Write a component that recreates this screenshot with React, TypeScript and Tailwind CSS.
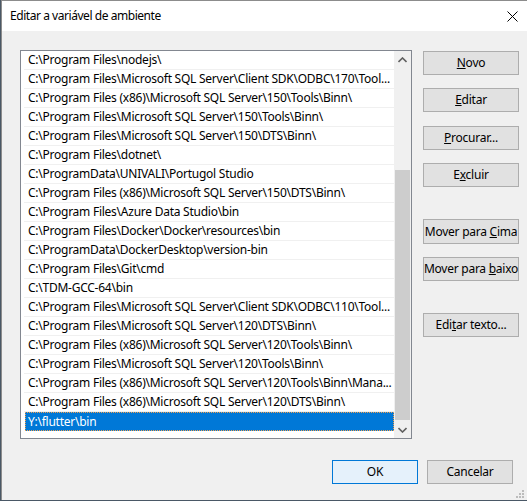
import { ReactNode } from 'react'

const paths = [
  'C:\\Program Files\\nodejs\\',
  'C:\\Program Files\\Microsoft SQL Server\\Client SDK\\ODBC\\170\\Tool...',
  'C:\\Program Files (x86)\\Microsoft SQL Server\\150\\Tools\\Binn\\',
  'C:\\Program Files\\Microsoft SQL Server\\150\\Tools\\Binn\\',
  'C:\\Program Files\\Microsoft SQL Server\\150\\DTS\\Binn\\',
  'C:\\Program Files\\dotnet\\',
  'C:\\ProgramData\\UNIVALI\\Portugol Studio',
  'C:\\Program Files (x86)\\Microsoft SQL Server\\150\\DTS\\Binn\\',
  'C:\\Program Files\\Azure Data Studio\\bin',
  'C:\\Program Files\\Docker\\Docker\\resources\\bin',
  'C:\\ProgramData\\DockerDesktop\\version-bin',
  'C:\\Program Files\\Git\\cmd',
  'C:\\TDM-GCC-64\\bin',
  'C:\\Program Files\\Microsoft SQL Server\\Client SDK\\ODBC\\110\\Tool...',
  'C:\\Program Files\\Microsoft SQL Server\\120\\DTS\\Binn\\',
  'C:\\Program Files (x86)\\Microsoft SQL Server\\120\\Tools\\Binn\\',
  'C:\\Program Files\\Microsoft SQL Server\\120\\Tools\\Binn\\',
  'C:\\Program Files (x86)\\Microsoft SQL Server\\120\\Tools\\Binn\\Mana...',
  'C:\\Program Files (x86)\\Microsoft SQL Server\\120\\DTS\\Binn\\',
  'Y:\\flutter\\bin',
]

function Btn({ children, className = '', primary = false }: { children: ReactNode; className?: string; primary?: boolean }) {
  return (
    <button
      className={`h-[24px] flex items-center justify-center whitespace-nowrap text-[12px] tracking-[-0.25px] text-black border ${
        primary ? 'border-[#0078d7] bg-[#e5f1fb]' : 'border-[#adadad] bg-[#e1e1e1]'
      } ${className}`}
    >
      <span>{children}</span>
    </button>
  )
}

export default function App() {
  const selected = paths.length - 1

  return (
    <div
      className="w-[527px] h-[501px] bg-[#4a5866] pl-[1px] overflow-hidden"
      style={{ fontFamily: '"Noto Sans", "Liberation Sans", sans-serif' }}
    >
      <div className="h-[500px] border-l border-t border-[#8c8c8c] bg-[#f0f0f0] flex flex-col">
        {/* title bar */}
        <div className="h-[30px] bg-white flex items-center justify-between pl-[8px] pr-[9px] shrink-0">
          <span className="text-[12px] tracking-[-0.45px] text-black">Editar a variável de ambiente</span>
          <svg width="11" height="11" viewBox="0 0 11 11" className="text-black">
            <path d="M0.5 0.5 L10.5 10.5 M10.5 0.5 L0.5 10.5" stroke="currentColor" strokeWidth="1" />
          </svg>
        </div>

        <div className="flex pt-[19px] pl-[18px]">
          {/* list box */}
          <div className="w-[392px] h-[389px] border border-[#828790] bg-white flex">
            <div className="flex-1 min-w-0 pl-[3px] flex flex-col">
              {paths.map((p, i) => (
                <div
                  key={i}
                  className={`h-[19px] shrink-0 flex items-center whitespace-nowrap overflow-hidden text-[12px] tracking-[-0.25px] ${
                    i === selected
                      ? 'bg-[#0078d7] text-white ml-[1px] border border-dotted border-[#f0a050] pl-[2px]'
                      : 'text-black border-b border-[#f0f0f0] pl-[4px]'
                  }`}
                >
                  {p}
                </div>
              ))}
            </div>
            {/* vertical scrollbar */}
            <div className="w-[17px] shrink-0 bg-[#f0f0f0] flex flex-col">
              <div className="h-[17px] flex items-center justify-center">
                <svg width="9" height="6" viewBox="0 0 9 6">
                  <path d="M0.5 5 L4.5 1 L8.5 5" stroke="#606060" strokeWidth="1.6" fill="none" />
                </svg>
              </div>
              <div className="flex-1 px-[1px] pt-[102px] pb-[1px]">
                <div className="h-full bg-[#cdcdcd]" />
              </div>
              <div className="h-[17px] flex items-center justify-center">
                <svg width="9" height="6" viewBox="0 0 9 6">
                  <path d="M0.5 1 L4.5 5 L8.5 1" stroke="#606060" strokeWidth="1.6" fill="none" />
                </svg>
              </div>
            </div>
          </div>

          {/* action buttons */}
          <div className="ml-[11px] w-[96px] flex flex-col pt-[1px]">
            <Btn>
              <u>N</u>ovo
            </Btn>
            <Btn className="mt-[13px]">
              <u>E</u>ditar
            </Btn>
            <Btn className="mt-[14px]">
              <u>P</u>rocurar...
            </Btn>
            <Btn className="mt-[13px]">
              E<u>x</u>cluir
            </Btn>
            <Btn className="mt-[32px] h-[25px]">
              Mover para <u>C</u>ima
            </Btn>
            <Btn className="mt-[13px]">
              Mover para <u>b</u>aixo
            </Btn>
            <Btn className="mt-[32px]">
              Edi<u>t</u>ar texto...
            </Btn>
          </div>
        </div>

        <div className="flex justify-end gap-[9px] pr-[14px] mt-[21px]">
          <Btn primary className="w-[86px]">
            OK
          </Btn>
          <Btn className="w-[86px]">Cancelar</Btn>
        </div>

        {/* size grip */}
        <div className="flex justify-end pr-[3px] mt-[6px]">
          <svg width="8" height="8" viewBox="0 0 8 8">
            <rect x="6" y="0" width="2" height="2" fill="#bcbcbc" />
            <rect x="3" y="3" width="2" height="2" fill="#bcbcbc" />
            <rect x="6" y="3" width="2" height="2" fill="#bcbcbc" />
            <rect x="0" y="6" width="2" height="2" fill="#bcbcbc" />
            <rect x="3" y="6" width="2" height="2" fill="#bcbcbc" />
            <rect x="6" y="6" width="2" height="2" fill="#bcbcbc" />
          </svg>
        </div>
      </div>
    </div>
  )
}
